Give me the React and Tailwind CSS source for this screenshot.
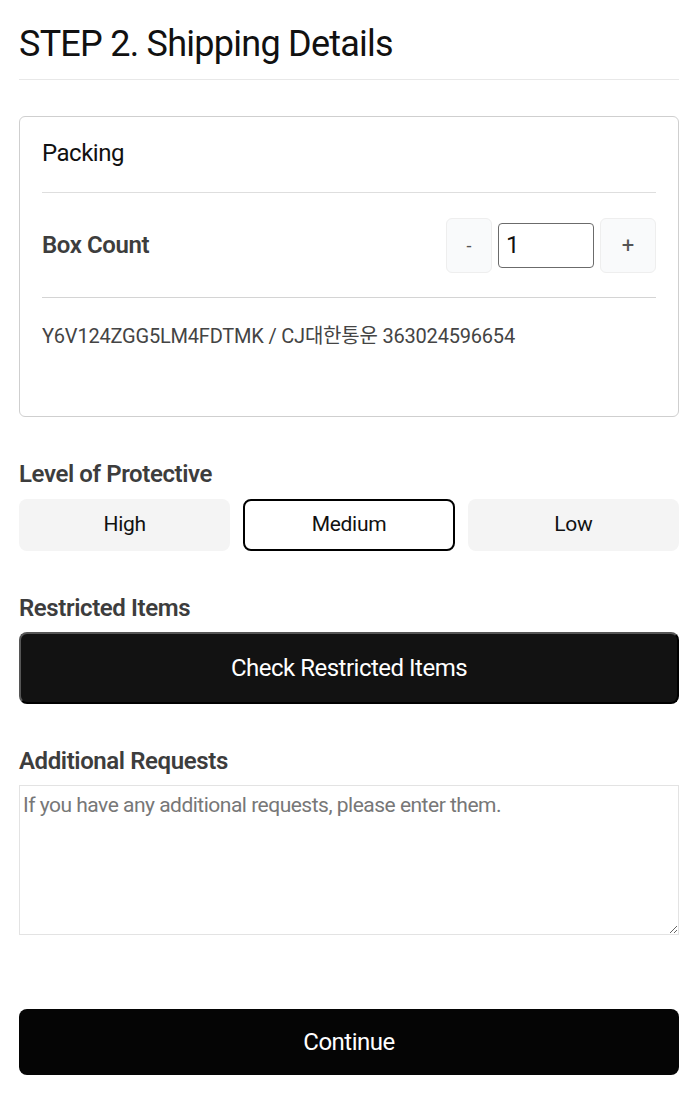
import React, { useState } from 'react';

const levels = ['High', 'Medium', 'Low'];

const App = () => {
    const [count, setCount] = useState(1);
    const [level, setLevel] = useState('Medium');

    return (
        <div className="w-full bg-white pl-[19px] pr-[21px] pt-[22px] pb-5 text-[#111] font-['Roboto',sans-serif]">
            <h1 className="text-[36px] leading-[44px] tracking-[-0.75px] text-[#111]">STEP 2. Shipping Details</h1>
            <div className="mt-[13px] h-px bg-[#e8e8e8]" />

            <div className="mt-[36px] rounded-[6px] border border-[#cfcfcf] px-[22px] pb-[66px]">
                <div className="h-[75px] flex items-center pb-[3px] text-[24px] tracking-[-0.5px]">Packing</div>
                <div className="h-px bg-[#dedede]" />
                <div className="h-[104px] flex items-center justify-between">
                    <span className="text-[24px] font-semibold tracking-[-0.4px] text-[#3d3d3d]">Box Count</span>
                    <div className="flex items-center gap-[6px]">
                        <button
                            onClick={() => setCount(Math.max(1, count - 1))}
                            className="w-[46px] h-[55px] rounded-[6px] border border-[#eeeeee] bg-[#f9fafb] text-[18px] text-[#555]"
                        >
                            -
                        </button>
                        <input
                            value={count}
                            onChange={(e) => setCount(e.target.value)}
                            className="w-[96px] h-[45px] rounded-[4px] border border-[#6b6b6b] px-[7px] text-[24px] text-[#111] outline-none"
                        />
                        <button
                            onClick={() => setCount(Number(count) + 1)}
                            className="w-[56px] h-[55px] rounded-[6px] border border-[#eeeeee] bg-[#f9fafb] text-[22px] text-[#555]"
                        >
                            +
                        </button>
                    </div>
                </div>
                <div className="h-px bg-[#d4d4d4]" />
                <p className="mt-[24px] text-[20px] leading-[28px] tracking-[-0.2px] text-[#444] font-['Roboto','Noto_Sans_CJK_KR',sans-serif]">
                    Y6V124ZGG5LM4FDTMK / CJ대한통운 363024596654
                </p>
            </div>

            <h2 className="mt-[41px] text-[24px] leading-[32px] font-semibold tracking-[-0.4px] text-[#3d3d3d]">Level of Protective</h2>
            <div className="mt-[9px] grid grid-cols-3 gap-[13px]">
                {levels.map((l) => (
                    <button
                        key={l}
                        onClick={() => setLevel(l)}
                        className={
                            l === level
                                ? 'h-[52px] rounded-[8px] border-2 border-black bg-white text-[21px] tracking-[-0.3px] text-[#111]'
                                : 'h-[52px] rounded-[8px] border-2 border-transparent bg-[#f4f4f4] text-[21px] tracking-[-0.3px] text-[#111]'
                        }
                    >
                        {l}
                    </button>
                ))}
            </div>

            <h2 className="mt-[41px] text-[24px] leading-[32px] font-semibold tracking-[-0.4px] text-[#3d3d3d]">Restricted Items</h2>
            <button className="mt-[8px] w-full h-[72px] rounded-[8px] border-2 border-t-[#565656] border-l-[#565656] border-b-black border-r-black bg-[#121212] text-[24px] tracking-[-0.5px] text-white">
                Check Restricted Items
            </button>

            <h2 className="mt-[41px] text-[24px] leading-[32px] font-semibold tracking-[-0.4px] text-[#3d3d3d]">Additional Requests</h2>
            <textarea
                placeholder="If you have any additional requests, please enter them."
                className="mt-[8px] block w-full h-[150px] border border-[#e3e3e3] px-[3px] py-[4px] text-[21px] leading-[30px] tracking-[-0.5px] text-[#111] placeholder:text-[#777] outline-none"
            />

            <button className="mt-[74px] w-full h-[66px] rounded-[8px] bg-[#050505] text-[24px] tracking-[-0.5px] text-white">
                Continue
            </button>
        </div>
    );
};

export default App;
